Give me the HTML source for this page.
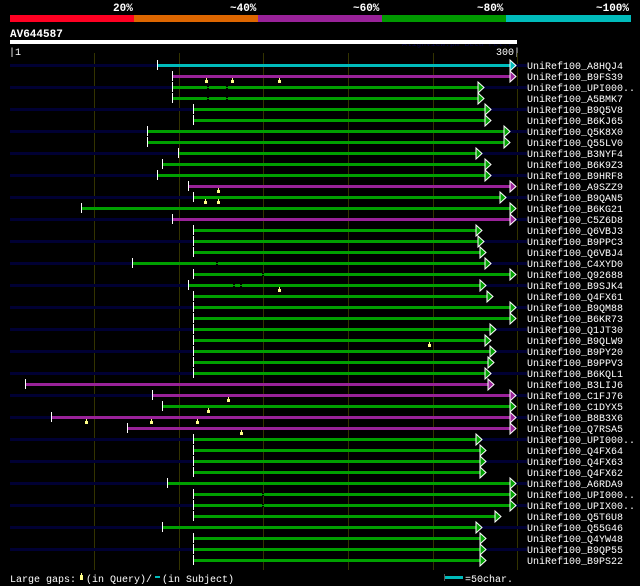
<!DOCTYPE html>
<html><head><meta charset="utf-8"><style>
html,body{margin:0;padding:0;background:#000;width:640px;height:586px;overflow:hidden}
svg{display:block}
text{font-family:"Liberation Mono","DejaVu Sans Mono",monospace;fill:#fff}
</style></head><body>
<svg id="s" width="640" height="586" xmlns="http://www.w3.org/2000/svg">
<text x="113" y="11" font-size="11" font-weight="bold">20%</text>
<text x="230" y="11" font-size="11" font-weight="bold">~40%</text>
<text x="353" y="11" font-size="11" font-weight="bold">~60%</text>
<text x="477" y="11" font-size="11" font-weight="bold">~80%</text>
<text x="596" y="11" font-size="11" font-weight="bold">~100%</text>
<rect x="10" y="15" width="124" height="7" fill="#ff0022"/>
<rect x="134" y="15" width="124" height="7" fill="#dd6600"/>
<rect x="258" y="15" width="124" height="7" fill="#992299"/>
<rect x="382" y="15" width="124" height="7" fill="#009900"/>
<rect x="506" y="15" width="125" height="7" fill="#00bbbb"/>
<text x="10" y="37" font-size="11" font-weight="bold">AV644587</text>
<text x="402" y="46" font-size="8" style="fill:#000044">AlignView.pm Beta rel.7</text>
<rect x="10" y="40" width="507" height="4" fill="#fff"/>
<text x="9" y="55" font-size="10">|1</text>
<text x="496" y="55" font-size="10">300|</text>
<g id="grid" stroke="#333300" stroke-width="1"></g>
<g id="rows"></g>
<text x="10" y="582" font-size="10">Large gaps:</text>
<rect x="80" y="575" width="3" height="5" fill="#ffff88"/><rect x="81" y="573" width="1" height="2" fill="#ffff88"/>
<text x="86" y="582" font-size="10">(in Query)/</text>
<rect x="155" y="576" width="5" height="2" fill="#00bbbb"/>
<text x="162" y="582" font-size="10">(in Subject)</text>
<rect x="445" y="576" width="18" height="3" fill="#00bbbb"/>
<rect x="444" y="574" width="1" height="7" fill="#555"/>
<text x="465" y="582" font-size="10">=50char.</text>
</svg>
<script>
var NS="http://www.w3.org/2000/svg";
function el(p,t,a){var e=document.createElementNS(NS,t);for(var k in a)e.setAttribute(k,a[k]);p.appendChild(e);return e;}
var g=document.getElementById('grid');
[94,179,263,348,433].forEach(function(x){el(g,'line',{x1:x+.5,y1:53,x2:x+.5,y2:570});});
el(g,'line',{x1:517.5,y1:53,x2:517.5,y2:570});
var C={c:'#00bbbb',p:'#992299',g:'#00a000'};
var R=[
["A8HQJ4",'c',158,510,1,[]],
["B9FS39",'p',173,510,0,[206,232,279]],
["UPI000..",'g',173,478,1,[],[207,226]],
["A5BMK7",'g',173,478,0,[],[207,226]],
["B9Q5V8",'g',194,485,1,[]],
["B6KJ65",'g',194,485,0,[]],
["Q5K8X0",'g',148,504,1,[]],
["Q55LV0",'g',148,504,0,[]],
["B3NYF4",'g',179,476,1,[]],
["B6K9Z3",'g',163,485,0,[]],
["B9HRF8",'g',158,485,1,[]],
["A9SZZ9",'p',189,510,0,[218]],
["B9QAN5",'g',194,500,1,[205,218]],
["B6KG21",'g',82,510,0,[]],
["C5Z6D8",'p',173,510,1,[]],
["Q6VBJ3",'g',194,476,0,[]],
["B9PPC3",'g',194,478,1,[]],
["Q6VBJ4",'g',194,480,0,[]],
["C4XYD0",'g',133,485,1,[],[216]],
["Q92688",'g',194,510,0,[],[262]],
["B9SJK4",'g',189,480,1,[279],[233,240]],
["Q4FX61",'g',194,487,0,[]],
["B9QM88",'g',194,510,1,[]],
["B6KR73",'g',194,510,0,[]],
["Q1JT30",'g',194,490,1,[]],
["B9QLW9",'g',194,485,0,[429]],
["B9PY20",'g',194,490,1,[]],
["B9PPV3",'g',194,488,0,[]],
["B6KQL1",'g',194,485,1,[]],
["B3LIJ6",'p',26,488,0,[]],
["C1FJ76",'p',153,510,1,[228]],
["C1DYX5",'g',163,510,0,[208]],
["B8B3X6",'p',52,510,1,[86,151,197]],
["Q7RSA5",'p',128,510,0,[241]],
["UPI000..",'g',194,476,1,[]],
["Q4FX64",'g',194,480,0,[]],
["Q4FX63",'g',194,480,1,[]],
["Q4FX62",'g',194,480,0,[]],
["A6RDA9",'g',168,510,1,[]],
["UPI000..",'g',194,510,0,[],[262]],
["UPIX00..",'g',194,510,1,[],[262]],
["Q5T6U8",'g',194,495,0,[]],
["Q55G46",'g',163,476,1,[]],
["Q4YW48",'g',194,480,0,[]],
["B9QP55",'g',194,480,1,[]],
["B9PS22",'g',194,480,0,[]]
];
var rg=document.getElementById('rows');
R.forEach(function(r,i){
 var y=65+i*11;
 if(r[4]) el(rg,'rect',{x:10,y:y-1,width:517,height:3,fill:'#000033'});
 el(rg,'rect',{x:r[2],y:y-1,width:r[3]-r[2],height:3,fill:C[r[1]]});
 (r[6]||[]).forEach(function(b){el(rg,'rect',{x:b,y:y-1,width:2,height:3,fill:'#000'});el(rg,'rect',{x:b,y:y,width:2,height:1,fill:C[r[1]]});});
 el(rg,'rect',{x:r[2]-1,y:y-5,width:1,height:10,fill:'#fff'});
 var x=r[3];
 el(rg,'path',{d:'M'+x+' '+(y-5)+'L'+(x+6)+' '+(y+.5)+'L'+x+' '+(y+6)+'Z',fill:C[r[1]],stroke:'#fff','stroke-width':1});
 r[5].forEach(function(m){el(rg,'rect',{x:m-1,y:y+4,width:3,height:3,fill:'#ffff88'});el(rg,'rect',{x:m,y:y+2,width:1,height:2,fill:'#ffff88'});});
 var t=el(rg,'text',{x:527,y:y+4,'font-size':'10'});t.textContent='UniRef100_'+r[0];
});
</script>
</body></html>
